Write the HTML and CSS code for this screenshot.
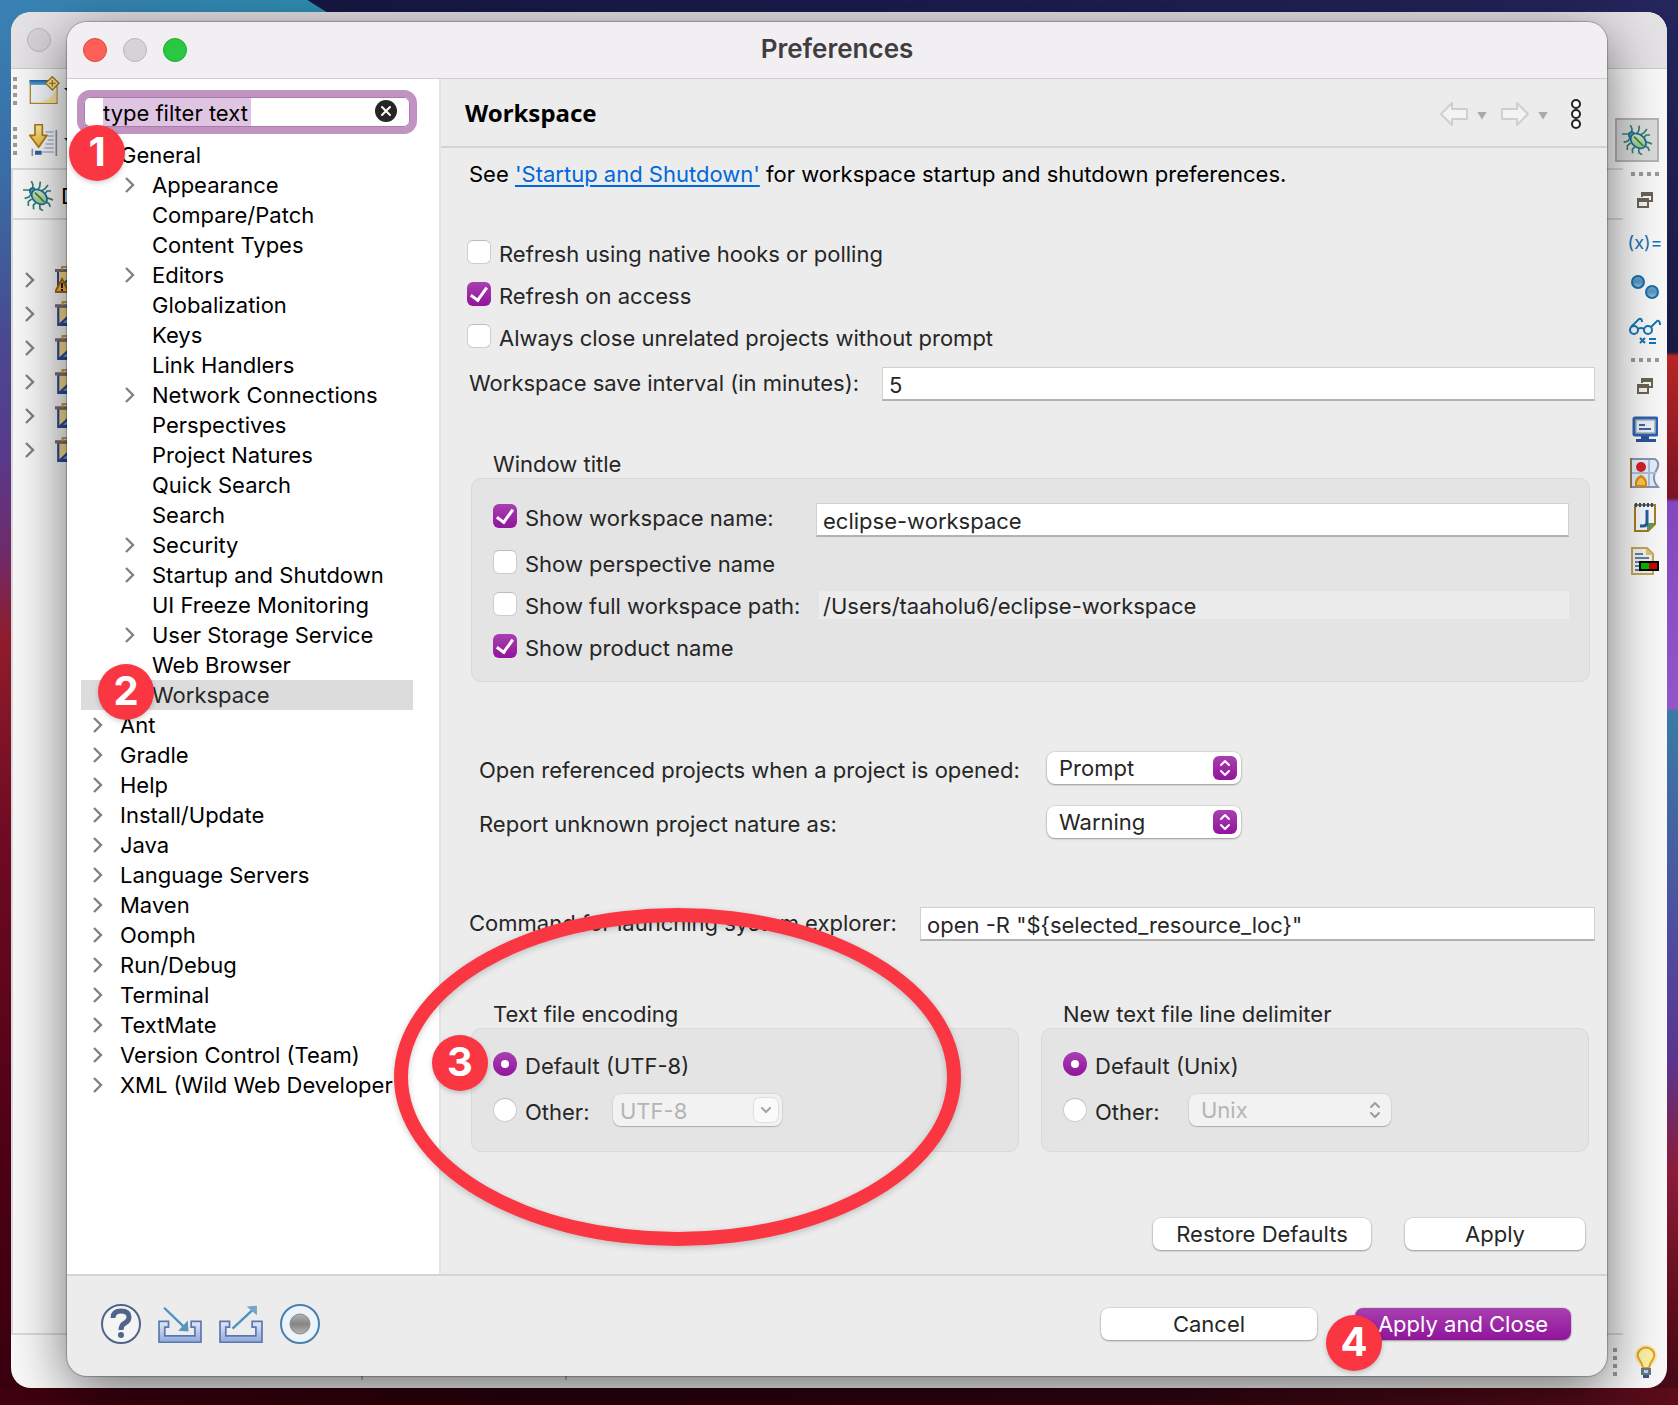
FILE: index.html
```html
<!DOCTYPE html>
<html lang="en">
<head>
<meta charset="utf-8">
<meta name="viewport" content="width=device-width, initial-scale=1">
<title>Preferences</title>
<link rel="stylesheet" href="styles.css">
</head>
<body>
<svg class="defs" width="0" height="0" aria-hidden="true">
  <defs>
    <linearGradient id="leaf" x1="0" y1="0" x2="1" y2="1"><stop offset="0" stop-color="#e3f3d8"/><stop offset="1" stop-color="#86bd70"/></linearGradient>
    <linearGradient id="gold" x1="0" y1="0" x2="0" y2="1"><stop offset="0" stop-color="#fff0b0"/><stop offset="1" stop-color="#f0b52e"/></linearGradient>
    <linearGradient id="steel" x1="0" y1="0" x2="0" y2="1"><stop offset="0" stop-color="#e2eaf8"/><stop offset="1" stop-color="#8fa9d8"/></linearGradient>
    <linearGradient id="orb" x1="0" y1="0" x2="0" y2="1"><stop offset="0" stop-color="#6fa6cb"/><stop offset=".5" stop-color="#5793bd"/><stop offset="1" stop-color="#a5c8de"/></linearGradient>
    <linearGradient id="grey" x1="0" y1="0" x2="0" y2="1"><stop offset="0" stop-color="#b4b4b4"/><stop offset=".5" stop-color="#858585"/><stop offset="1" stop-color="#b4b4b4"/></linearGradient>
    <symbol id="chevron" viewBox="0 0 10 16"><path d="M1 1l7 7-7 7" fill="none" stroke="#808080" stroke-width="2.4"/></symbol>
    <symbol id="updown" viewBox="0 0 12 18"><path d="M2 6l4-4 4 4M2 12l4 4 4-4" fill="none" stroke="currentColor" stroke-width="2" stroke-linecap="round" stroke-linejoin="round"/></symbol>
    <symbol id="bug" viewBox="0 0 90 90">
      <g fill="none" stroke="#347f74" stroke-width="5"><path d="M25 0l5 12-2 14M0 27h20l8 4M52 2l-2 16-6 8M75 12l-8 10-12 8M84 30l-12 0-6 8M68 50l12 3 10 4M68 62l10 6 4 10M24 40l-6 8-13 4M26 54l-10 8v13M38 66l-7 6 1 13M50 70l1 13 9 6"/></g>
      <circle cx="29" cy="30" r="9" fill="#4a9a8a" stroke="#176b9a" stroke-width="4"/>
      <ellipse cx="49" cy="48" rx="26" ry="19" transform="rotate(42 49 48)" fill="url(#leaf)" stroke="#176b9a" stroke-width="5"/>
      <path d="M36 35l28 28" stroke="#3f7d3a" stroke-width="5"/>
    </symbol>
    <symbol id="project" viewBox="0 0 24 24">
      <path d="M3 5h18v17H3z" fill="#f7dc8e" stroke="#2e4a9a" stroke-width="2"/><path d="M0 3h12v3H0z" fill="#7f6b75"/><path d="M7 4V1h9v3" fill="none" stroke="#c9a145" stroke-width="2"/><path d="M5 21L17 10v11z" fill="#7fb4e6" stroke="#2e4a9a" stroke-width="2"/>
    </symbol>
    <symbol id="restore" viewBox="0 0 16 16"><path d="M5 1h10v8h-3M5 1v4M5 2h10" fill="none" stroke="#6b6255" stroke-width="2"/><path d="M4 0h12v4H4z" fill="#6b6255"/><path d="M1 8h10v7H1z" fill="#f4f4f4" stroke="#6b6255" stroke-width="2"/><path d="M0 6h12v4H0z" fill="#6b6255"/></symbol>
    <symbol id="arrow" viewBox="0 0 30 26"><path d="M2 13L13 2v6h15v10H13v6z" fill="#f3f3f3" stroke="#cfcfcf" stroke-width="2" stroke-linejoin="round"/></symbol>
  </defs>
</svg>

<section class="ide" aria-label="Workbench">
  <div class="ide-title"><span class="light light-idle"></span></div>
  <div class="ide-main">
    <div class="ide-left">
      <div class="ide-tools">
        <div class="tool-row">
          <span class="grip"></span>
          <svg width="32" height="30" viewBox="0 0 96 90"><path d="M4 16h80v66H4z" fill="#f2f7fc" stroke="#b08a35" stroke-width="4"/><path d="M2 12h56v14H2z" fill="#3f8fc9"/><path d="M2 12h56v5H2z" fill="#2a6aa8"/><path d="M20 80q50-6 62-44v44z" fill="#f9e6a8"/><path d="M70 2l20 20-20 20-20-20z" fill="#ffe9a0" stroke="#a87a14" stroke-width="4"/><path d="M70 12v20M60 22h20" stroke="#a87a14" stroke-width="4"/></svg>
          <span class="caret"></span>
        </div>
        <div class="tool-row">
          <span class="grip"></span>
          <svg width="32" height="34" viewBox="0 0 96 102"><path d="M50 24h24M56 36h18M56 48h18M50 60h24M46 72h28M40 84h34" stroke="#a9b6d2" stroke-width="4"/><path d="M82 18v78M10 74v22" stroke="#8794ac" stroke-width="5"/><path d="M18 80h20v12H18z" fill="#2b62a3"/><path d="M18 2h22v32h14L29 70 2 34h16z" fill="url(#gold)" stroke="#a87a14" stroke-width="5" stroke-linejoin="round"/></svg>
          <span class="caret"></span>
        </div>
      </div>
      <div class="view">
        <div class="view-tab"><svg width="30" height="30"><use href="#bug"/></svg><span>Debug</span></div>
        <ul class="project-list">
          <li><svg width="10" height="18"><use href="#chevron"/></svg><svg width="26" height="28" viewBox="0 0 26 28"><use href="#project" width="24" height="24"/><path d="M7 13l7 13H0z" fill="#f3b450" stroke="#a8660c" stroke-width="2"/><path d="M7 17v5M7 23v2" stroke="#222" stroke-width="2"/></svg></li>
          <li><svg width="10" height="18"><use href="#chevron"/></svg><svg width="26" height="26"><use href="#project"/></svg></li>
          <li><svg width="10" height="18"><use href="#chevron"/></svg><svg width="26" height="26"><use href="#project"/></svg></li>
          <li><svg width="10" height="18"><use href="#chevron"/></svg><svg width="26" height="26"><use href="#project"/></svg></li>
          <li><svg width="10" height="18"><use href="#chevron"/></svg><svg width="26" height="26"><use href="#project"/></svg></li>
          <li><svg width="10" height="18"><use href="#chevron"/></svg><svg width="26" height="26"><use href="#project"/></svg></li>
        </ul>
      </div>
    </div>
    <div class="ide-right">
      <span class="perspective"><svg width="30" height="30"><use href="#bug"/></svg></span>
      <span class="grip-flat"></span>
      <span class="trim"><svg width="16" height="16"><use href="#restore"/></svg></span>
      <span class="fast variables">(x)=</span>
      <span class="fast"><svg width="28" height="24" viewBox="0 0 28 24"><g fill="url(#orb)" stroke="#146fae" stroke-width="2"><circle cx="7" cy="7" r="6"/><circle cx="21" cy="17" r="6"/></g></svg></span>
      <span class="fast"><svg width="32" height="28" viewBox="0 0 32 28"><g fill="none" stroke="#1474b5" stroke-width="2"><circle cx="5" cy="13" r="4"/><circle cx="19" cy="13" r="4"/><path d="M9 12q3-2 6 0M2 10L10 2q3-1 3 3M22 10l6-6q3-1 3 4M11 21l5 5M16 21l-5 5M20 22h7M20 26h7"/></g></svg></span>
      <span class="grip-flat"></span>
      <span class="trim"><svg width="16" height="16"><use href="#restore"/></svg></span>
      <span class="fast"><svg width="26" height="26" viewBox="0 0 26 26"><rect x="2" y="2" width="23" height="17" rx="1" fill="#e8f1fa" stroke="#2c62b0" stroke-width="3"/><path d="M4 4h19v13H4z" fill="none" stroke="#8a8f98"/><path d="M7 9h6M7 13h12" stroke="#44639c" stroke-width="2"/><path d="M9 20h8v3H9zM4 23h20v3H4z" fill="#2b549b"/></svg></span>
      <span class="fast"><svg width="30" height="30" viewBox="0 0 30 30"><path d="M1 1h24q6 4 1 12t2 16H1z" fill="#e4edf8" stroke="#8496b4" stroke-width="2"/><path d="M1 0v30" stroke="#8f7c45" stroke-width="2"/><path d="M19 2v26M2 15h24" stroke="#aac0dd" stroke-width="2"/><circle cx="11" cy="9" r="5" fill="#d81e2c"/><path d="M6 28v-4q1-4 5-6 4 2 5 6v4z" fill="#fbc64d" stroke="#e08a12" stroke-width="2"/></svg></span>
      <span class="fast"><svg width="24" height="32" viewBox="0 0 24 32"><path d="M2 4h20v19l-7 7H2z" fill="#f6fafe" stroke="#a67c1c" stroke-width="2"/><path d="M22 22h-8v8z" fill="#4f9d64"/><path d="M3 2v4M7 2v4M11 2v4M15 2v4M19 2v4" stroke="#23507e" stroke-width="2"/><path d="M14 9v12q0 4-4 4H7" fill="none" stroke="#225f96" stroke-width="3"/></svg></span>
      <span class="fast"><svg width="28" height="28" viewBox="0 0 28 28"><path d="M1 1h15l6 6v20H1z" fill="#f5f3e8" stroke="#bda75c" stroke-width="2"/><path d="M15 1v7h7z" fill="#dcc274"/><path d="M4 7h8M4 11h14M4 15h5M4 19h4M4 23h10" stroke="#5f7eae" stroke-width="2"/><path d="M8 14h20v10H8z" fill="#000"/><path d="M10 16h8v6h-8z" fill="#0b0"/><path d="M18 16h8v6h-8z" fill="#c00"/></svg></span>
    </div>
  </div>
  <div class="status">
    <span class="status-cell"></span><span class="status-cell"></span>
    <span class="grip"></span>
    <svg width="22" height="34" viewBox="0 0 22 34"><circle cx="11" cy="11" r="11" fill="#fce6b4"/><path d="M8 23Q7 18 4 14q-3-5 1-9 6-5 12 0 4 4 1 9-3 4-4 9z" fill="#fdf1a6" stroke="#e2a11e" stroke-width="2"/><path d="M6 23h10v7H6z" fill="#64788c"/><path d="M9 25h4v3H9z" fill="#c5d2de"/><path d="M8 30h6v3H8z" fill="#3e5878"/></svg>
  </div>
</section>

<main class="dialog" role="dialog" aria-labelledby="dialog-title">
  <header class="titlebar">
    <div class="lights"><span class="light light-close"></span><span class="light light-idle"></span><span class="light light-zoom"></span></div>
    <h1 id="dialog-title">Preferences</h1>
  </header>

  <div class="body">
    <nav class="sidebar" aria-label="Preference pages">
      <div class="search">
        <input type="text" value="type filter text" aria-label="Filter">
        <button type="button" class="clear" aria-label="Clear"><svg width="22" height="22" viewBox="0 0 22 22"><circle cx="11" cy="11" r="11" fill="#262626"/><path d="M7 7l8 8M15 7l-8 8" stroke="#fff" stroke-width="2" stroke-linecap="round"/></svg></button>
      </div>
      <ul class="tree">
        <li class="node"><i></i>General</li>
        <li class="node sub"><svg><use href="#chevron"/></svg>Appearance</li>
        <li class="node sub"><i></i>Compare/Patch</li>
        <li class="node sub"><i></i>Content Types</li>
        <li class="node sub"><svg><use href="#chevron"/></svg>Editors</li>
        <li class="node sub"><i></i>Globalization</li>
        <li class="node sub"><i></i>Keys</li>
        <li class="node sub"><i></i>Link Handlers</li>
        <li class="node sub"><svg><use href="#chevron"/></svg>Network Connections</li>
        <li class="node sub"><i></i>Perspectives</li>
        <li class="node sub"><i></i>Project Natures</li>
        <li class="node sub"><i></i>Quick Search</li>
        <li class="node sub"><i></i>Search</li>
        <li class="node sub"><svg><use href="#chevron"/></svg>Security</li>
        <li class="node sub"><svg><use href="#chevron"/></svg>Startup and Shutdown</li>
        <li class="node sub"><i></i>UI Freeze Monitoring</li>
        <li class="node sub"><svg><use href="#chevron"/></svg>User Storage Service</li>
        <li class="node sub"><i></i>Web Browser</li>
        <li class="node sub selected"><i></i>Workspace</li>
        <li class="node"><svg><use href="#chevron"/></svg>Ant</li>
        <li class="node"><svg><use href="#chevron"/></svg>Gradle</li>
        <li class="node"><svg><use href="#chevron"/></svg>Help</li>
        <li class="node"><svg><use href="#chevron"/></svg>Install/Update</li>
        <li class="node"><svg><use href="#chevron"/></svg>Java</li>
        <li class="node"><svg><use href="#chevron"/></svg>Language Servers</li>
        <li class="node"><svg><use href="#chevron"/></svg>Maven</li>
        <li class="node"><svg><use href="#chevron"/></svg>Oomph</li>
        <li class="node"><svg><use href="#chevron"/></svg>Run/Debug</li>
        <li class="node"><svg><use href="#chevron"/></svg>Terminal</li>
        <li class="node"><svg><use href="#chevron"/></svg>TextMate</li>
        <li class="node"><svg><use href="#chevron"/></svg>Version Control (Team)</li>
        <li class="node"><svg><use href="#chevron"/></svg>XML (Wild Web Developer</li>
      </ul>
    </nav>

    <section class="page">
      <header class="page-head">
        <h2>Workspace</h2>
        <div class="history">
          <button type="button" aria-label="Back"><svg width="30" height="26"><use href="#arrow"/></svg></button>
          <button type="button" class="drop" aria-label="Back history"></button>
          <button type="button" aria-label="Forward"><svg class="flip" width="30" height="26"><use href="#arrow"/></svg></button>
          <button type="button" class="drop" aria-label="Forward history"></button>
          <button type="button" class="more" aria-label="Menu"><svg width="10" height="30" viewBox="0 0 10 30"><g fill="#fff" stroke="#222" stroke-width="2"><circle cx="5" cy="5" r="4"/><circle cx="5" cy="15" r="4"/><circle cx="5" cy="25" r="4"/></g></svg></button>
        </div>
      </header>

      <form class="form">
        <p class="intro">See <a href="#startup">'Startup and Shutdown'</a> for workspace startup and shutdown preferences.</p>

        <div class="checks">
          <label class="option"><input type="checkbox"><span>Refresh using native hooks or polling</span></label>
          <label class="option"><input type="checkbox" checked><span>Refresh on access</span></label>
          <label class="option"><input type="checkbox"><span>Always close unrelated projects without prompt</span></label>
        </div>

        <div class="field save">
          <label for="interval">Workspace save interval (in minutes):</label>
          <input class="text" id="interval" type="text" value="5">
        </div>

        <section class="group title-group" aria-labelledby="g-title">
          <h3 id="g-title">Window title</h3>
          <div class="box">
            <div class="line line-input">
              <label class="option"><input type="checkbox" checked><span>Show workspace name:</span></label>
              <input class="text" type="text" value="eclipse-workspace" aria-label="Workspace name">
            </div>
            <div class="line"><label class="option"><input type="checkbox"><span>Show perspective name</span></label></div>
            <div class="line">
              <label class="option"><input type="checkbox"><span>Show full workspace path:</span></label>
              <input class="path" type="text" readonly value="/Users/taaholu6/eclipse-workspace" aria-label="Workspace path">
            </div>
            <div class="line"><label class="option"><input type="checkbox" checked><span>Show product name</span></label></div>
          </div>
        </section>

        <div class="choices">
          <label for="referenced">Open referenced projects when a project is opened:</label>
          <span class="picker"><select id="referenced"><option>Prompt</option></select><span class="knob"><svg width="12" height="18"><use href="#updown"/></svg></span></span>
          <label for="nature">Report unknown project nature as:</label>
          <span class="picker"><select id="nature"><option>Warning</option></select><span class="knob"><svg width="12" height="18"><use href="#updown"/></svg></span></span>
        </div>

        <div class="field command">
          <label for="command">Command for launching system explorer:</label>
          <input class="text" id="command" type="text" value="open -R &quot;${selected_resource_loc}&quot;">
        </div>

        <div class="pair">
          <section class="group" aria-labelledby="g-enc">
            <h3 id="g-enc">Text file encoding</h3>
            <div class="box radios">
              <label class="option"><input type="radio" name="enc" checked><span>Default (UTF-8)</span></label>
              <div class="other">
                <label class="option"><input type="radio" name="enc"><span>Other:</span></label>
                <span class="picker combo"><select disabled aria-label="Encoding"><option>UTF-8</option></select><span class="knob"><svg width="12" height="8" viewBox="0 0 12 8"><path d="M2 2l4 4 4-4" fill="none" stroke="#a3a3a3" stroke-width="2" stroke-linecap="round"/></svg></span></span>
              </div>
            </div>
          </section>
          <section class="group" aria-labelledby="g-delim">
            <h3 id="g-delim">New text file line delimiter</h3>
            <div class="box radios">
              <label class="option"><input type="radio" name="delim" checked><span>Default (Unix)</span></label>
              <div class="other">
                <label class="option"><input type="radio" name="delim"><span>Other:</span></label>
                <span class="picker plain"><select disabled aria-label="Line delimiter"><option>Unix</option></select><span class="knob"><svg width="12" height="18"><use href="#updown"/></svg></span></span>
              </div>
            </div>
          </section>
        </div>

        <div class="page-actions">
          <button type="button" class="btn restore">Restore Defaults</button>
          <button type="button" class="btn apply">Apply</button>
        </div>
      </form>
    </section>
  </div>

  <footer class="footer">
    <div class="footer-icons">
      <button type="button" aria-label="Help"><svg width="40" height="40" viewBox="0 0 40 40"><circle cx="20" cy="20" r="19" fill="#f4f4f4" stroke="#50648c" stroke-width="2"/><path d="M12 14q0-7 8-7t8 6q0 4-4 6-4 2-4 7" fill="none" stroke="#50648c" stroke-width="5"/><circle cx="20" cy="31" r="3" fill="#50648c"/></svg></button>
      <button type="button" aria-label="Import"><svg width="44" height="38" viewBox="0 0 130 112"><path d="M3 48H31V65H20V91H109V65H98V48H127V110H3Z" fill="url(#steel)" stroke="#5b76b0" stroke-width="5"/><path d="M18 8l58 56" stroke="#4b93c6" stroke-width="7"/><path d="M60 76l30 2-2-32z" fill="#5d94bb"/></svg></button>
      <button type="button" aria-label="Export"><svg width="44" height="38" viewBox="0 0 130 112"><path d="M3 48H31V65H20V91H109V65H98V48H127V110H3Z" fill="url(#steel)" stroke="#5b76b0" stroke-width="5"/><path d="M40 70l58-54" stroke="#4b93c6" stroke-width="7"/><path d="M82 4l30-2v28z" fill="#76a5c5"/></svg></button>
      <button type="button" aria-label="Record"><svg width="40" height="40" viewBox="0 0 40 40"><circle cx="20" cy="20" r="19" fill="#edf4f9" stroke="#4a80b0" stroke-width="2"/><circle cx="20" cy="20" r="10" fill="url(#grey)" stroke="#8c8c8c"/></svg></button>
    </div>
    <div class="footer-actions">
      <button type="button" class="btn wide">Cancel</button>
      <button type="button" class="btn wide primary">Apply and Close</button>
    </div>
  </footer>

  <span class="ring"></span>
  <span class="badge b1">1</span>
  <span class="badge b2">2</span>
  <span class="badge b3">3</span>
  <span class="badge b4">4</span>
</main>
</body>
</html>
```
FILE: styles.css
```css
* { box-sizing: border-box; }

body {
  margin: 0;
  min-height: 100vh;
  position: relative;
  overflow-x: hidden;
  display: flex;
  padding: 22px 71px 29px 67px;
  font-family: Inter, "Liberation Sans", sans-serif;
  font-size: 22px;
  line-height: 30px;
  color: #262626;
  background:
    linear-gradient(90deg, #40000f, #2a000b 30%, #300510 70%, #5a0c1a) bottom / 100% 17px no-repeat,
    linear-gradient(212deg, transparent 20px, #2f8fb4 21px, #3a80b3) left top / 346px 12px no-repeat,
    linear-gradient(90deg, #15163f, #1c1d50 60%, #24265c) top / 100% 12px no-repeat,
    linear-gradient(#3a82b5, #3a6da5 180px, #4a4a90 340px, #5a3a8a 460px, #6f2c6c 550px, #901d2c 640px, #700c24 830px, #4a0015 1200px, #38000f) left top / 50% 100% no-repeat,
    linear-gradient(#24265c, #1a1a44 352px, #b82626 356px, #7a1525 498px, #8348c0 502px, #9258c8 708px, #3a7ba6 712px, #4f50a0 920px, #5b3590 1060px, #8c1c3a 1170px, #5a0c1a 1320px, #400a18) right top / 50% 100% no-repeat;
}

h1, h2, h3, p, ul { margin: 0; padding: 0; font-size: inherit; font-weight: inherit; }
ul { list-style: none; }
button, input, select { font: inherit; color: inherit; margin: 0; }
button { padding: 0; border: 0; background: none; }
svg { display: block; flex: none; }
.defs { position: absolute; }

/* workbench behind the dialog */
.ide {
  position: absolute;
  inset: 12px 11px 17px 11px;
  display: flex;
  flex-direction: column;
  border-radius: 20px;
  overflow: hidden;
  background: #f8f8f8;
}
.ide-title { height: 57px; padding: 16px; background: #e5e2e6; border-bottom: 1px solid #ccc; }
.ide-main { flex: 1; display: flex; }
.ide-left { flex: 1; display: flex; flex-direction: column; }
.ide-tools { height: 99px; display: grid; align-content: start; gap: 7px; }
.tool-row { height: 43px; display: flex; align-items: center; padding: 0 2px; }
.tool-row svg { margin-left: 12px; }
.grip { width: 4px; height: 28px; background: repeating-linear-gradient(#a09a92 0 4px, transparent 4px 8px); }
.grip-flat { width: 28px; height: 4px; margin: 10px 8px 10px 0; background: repeating-linear-gradient(90deg, #a09a92 0 4px, transparent 4px 8px); }
.caret { margin-left: 3px; border: 5px solid transparent; border-top-color: #222; border-bottom: 0; }
.view { flex: 1; border: 2px solid #dadada; border-width: 2px 0 2px 2px; }
.view-tab { height: 50px; display: flex; align-items: center; gap: 8px; padding: 4px 0 0 10px; border-bottom: 2px solid #dadada; color: #000; }
.project-list { padding: 43px 0 0 12px; }
.project-list li { height: 34px; display: flex; align-items: center; gap: 20px; }
.ide-right { width: 44px; padding-top: 49px; display: flex; flex-direction: column; align-items: flex-end; }
.perspective { width: 44px; height: 44px; flex: none; margin-right: 8px; display: grid; place-items: center; border: 2px solid #b4b4b4; background: #dcdcdc; }
.trim { width: 44px; height: 28px; margin-bottom: 7px; display: grid; place-items: center; }
.fast { width: 44px; height: 44px; flex: none; display: grid; place-items: center; }
.fast + .grip-flat { margin-top: 5px; }
.variables { color: #1474b5; font-size: 18px; }
.status { height: 53px; display: flex; align-items: center; padding-right: 10px; }
.status-cell { width: 204px; height: 36px; border-right: 2px solid #bbb; }
.status-cell:first-child { width: 352px; }
.status .grip { margin: 0 18px 0 auto; }

/* dialog */
.dialog {
  position: relative;
  flex: 1;
  min-width: 0;
  display: flex;
  flex-direction: column;
  border-radius: 20px;
  background: #ececec;
  box-shadow: 0 0 1px 1px rgba(0, 0, 0, .25), 0 14px 56px rgba(0, 0, 0, .56);
}
.titlebar {
  height: 57px;
  display: grid;
  grid-template-columns: 1fr auto 1fr;
  align-items: center;
  padding: 0 16px;
  border-bottom: 1px solid #d0ced1;
  border-radius: 20px 20px 0 0;
  background: #f1eff2;
}
.titlebar h1 { font-size: 26px; font-weight: 600; color: #3f3d40; margin-bottom: 2px; }
.lights { display: flex; gap: 16px; }
.light { display: block; width: 24px; height: 24px; border-radius: 50%; border: 1px solid; }
.light-close { background: #fe5f57; border-color: #e2463f; }
.light-idle { background: #d5d3d6; border-color: #b9b7ba; }
.light-zoom { background: #2ac840; border-color: #1dab2f; }

.body { flex: 1; display: grid; grid-template-columns: 374px minmax(0, 1fr); }

.sidebar { background: #fff; border-right: 2px solid #e4e4e4; padding: 11px 0; color: #000; }
.search {
  position: relative;
  width: 340px;
  height: 44px;
  margin: 0 0 6px 10px;
  border: 7px solid #c193c2;
  border-radius: 13px;
  background: #fff;
  box-shadow: inset 0 0 0 1px #a97bab;
}
.search input {
  width: 100%;
  height: 30px;
  padding: 2px 40px 0 19px;
  border: 0;
  outline: 0;
  border-radius: 8px;
  background: linear-gradient(#dfc5e1, #dfc5e1) 19px 1px / 148px 28px no-repeat;
}
.clear { position: absolute; right: 13px; top: 3px; }

.tree { padding: 0 26px 0 14px; }
.node { height: 30px; display: flex; align-items: center; gap: 16px; padding-left: 11px; white-space: nowrap; }
.node svg, .node i { width: 12px; height: 16px; }
.sub { padding-left: 43px; }

.selected { background: #dcdcdc; color: #262626; }

.page { display: flex; flex-direction: column; }
.page-head {
  height: 69px;
  display: flex;
  align-items: center;
  justify-content: space-between;
  padding: 0 26px 0 24px;
  border-bottom: 2px solid #d4d4d4;
}
.page-head h2 { font-family: "Noto Sans", "Open Sans", sans-serif; font-size: 24px; font-weight: 700; color: #000; }
.history { display: flex; align-items: center; padding-top: 2px; }
.drop { width: 10px; height: 8px; margin: 4px 13px 0 8px; background: #aaa; clip-path: polygon(0 0, 100% 0, 50% 100%); }
.flip { transform: scaleX(-1); }
.more { margin-left: 10px; }

.form { flex: 1; padding: 11px 12px 24px 28px; }
.intro { color: #000; }
.intro a { color: #0068da; text-underline-offset: 3px; text-decoration-thickness: 2px; }

.checks { margin: 50px 0 0 -2px; display: grid; gap: 16px; }
.option { height: 26px; display: flex; align-items: center; gap: 8px; white-space: nowrap; }
.option span { padding-top: 4px; }
.option input {
  appearance: none;
  flex: none;
  width: 24px;
  height: 24px;
  border: 1px solid #cdcdcd;
  border-top-color: #bcbcbc;
  border-radius: 6px;
  background: #fff;
}
.option input[type="radio"] { border-radius: 50%; }
.option input:checked { border: 0; background: linear-gradient(#a93fb0, #90159c); }
.option input[type="checkbox"]:checked::before {
  content: "";
  box-sizing: border-box;
  display: block;
  width: 10px;
  height: 17px;
  margin: 2px 0 0 7px;
  border: solid #fff;
  border-width: 0 3px 3px 0;
  transform: rotate(36deg);
}
.option input[type="radio"]:checked::before {
  content: "";
  display: block;
  width: 8px;
  height: 8px;
  margin: 8px;
  border-radius: 50%;
  background: #fff;
}

.field { display: grid; align-items: center; }
.field label { padding-bottom: 3px; }
.save { margin-top: 18px; grid-template-columns: 413px 1fr; }
.command { margin-top: 69px; grid-template-columns: 451px 1fr; }
.text {
  width: 100%;
  height: 34px;
  padding: 2px 6px 0;
  border: 1px solid #d0d0d0;
  border-bottom: 2px solid #b2b2b2;
  border-radius: 0;
  background: #fff;
}

.group h3 { height: 29px; padding-left: 24px; }
.box { margin: 0 0 0 2px; border: 1px solid #d9d9d9; border-radius: 10px; background: #e4e4e4; }
.title-group { margin: 48px 5px 0 0; }
.title-group .box { padding: 24px 20px 6px 21px; }
.line { height: 42px; display: grid; grid-template-columns: 323px 1fr; align-items: start; }
.line-input { height: 46px; }
.path { height: 28px; margin-left: 3px; padding: 2px 4px 0; border: 0; background: #ececec; }

.choices { margin: 70px 0 0 10px; display: grid; grid-template-columns: 568px 1fr; gap: 22px 0; }
.choices label { height: 32px; padding-top: 3px; }
.picker { position: relative; display: block; width: 194px; height: 32px; }
.picker select {
  appearance: none;
  width: 100%;
  height: 100%;
  padding: 0 36px 0 12px;
  border: 0;
  border-radius: 8px;
  background: #fff;
  box-shadow: 0 0 1px 1px rgba(0, 0, 0, .08), 0 1px 2px rgba(0, 0, 0, .3);
}
.knob {
  position: absolute;
  top: 4px;
  right: 4px;
  width: 24px;
  height: 24px;
  display: grid;
  place-items: center;
  border-radius: 6px;
  color: #fff;
  background: linear-gradient(#a93fb0, #90159c);
  pointer-events: none;
}
.picker select:disabled { background: #f2f2f2; color: #b5b5b5; opacity: 1; box-shadow: 0 0 1px 1px rgba(0, 0, 0, .05), 0 1px 1px rgba(0, 0, 0, .2); }
.combo { width: 169px; }
.combo select { padding: 2px 36px 0 7px; }
.combo .knob { background: #fafafa; box-shadow: 0 0 1px 1px rgba(0, 0, 0, .08); }
.plain { width: 202px; }
.plain .knob { background: none; color: #9c9c9c; }

.pair { margin: 58px 6px 0 0; display: grid; grid-template-columns: 1fr 1fr; gap: 20px; }
.radios { padding: 22px 21px 24px; }
.other { height: 34px; margin-top: 16px; display: grid; grid-template-columns: 120px 1fr; align-items: center; }
.pair .group:last-child .other { grid-template-columns: 126px 1fr; }

.btn {
  height: 32px;
  border-radius: 8px;
  background: #fff;
  box-shadow: 0 0 1px 1px rgba(0, 0, 0, .08), 0 1px 2px rgba(0, 0, 0, .3);
}
.page-actions { margin: 66px 10px 0 0; display: flex; justify-content: flex-end; gap: 34px; }
.restore { width: 218px; }
.apply { width: 180px; }
.wide { width: 216px; }
.primary { color: #fff; background: linear-gradient(#a93fb0, #90159c); }

.footer {
  height: 102px;
  display: flex;
  align-items: center;
  justify-content: space-between;
  padding: 0 36px 4px 34px;
  border-top: 2px solid #d4d4d4;
}
.footer-icons { display: flex; align-items: center; gap: 17px; }
.footer-actions { display: flex; gap: 38px; }

/* annotations over the dialog */
.badge {
  position: absolute;
  width: 56px;
  height: 56px;
  border-radius: 50%;
  background: #fa3643;
  color: #fff;
  font-size: 40px;
  font-weight: 700;
  line-height: 54px;
  text-align: center;
  box-shadow: 0 2px 5px rgba(0, 0, 0, .2);
}
.b1 { left: 2px; top: 103px; }
.b2 { left: 31px; top: 642px; }
.b3 { left: 365px; top: 1013px; }
.b4 { left: 1259px; top: 1293px; }
.ring {
  position: absolute;
  left: 327px;
  top: 886px;
  width: 567px;
  height: 338px;
  border: 14px solid #fa3643;
  border-radius: 50%;
  filter: drop-shadow(0 2px 3px rgba(0, 0, 0, .2));
  pointer-events: none;
}
```
